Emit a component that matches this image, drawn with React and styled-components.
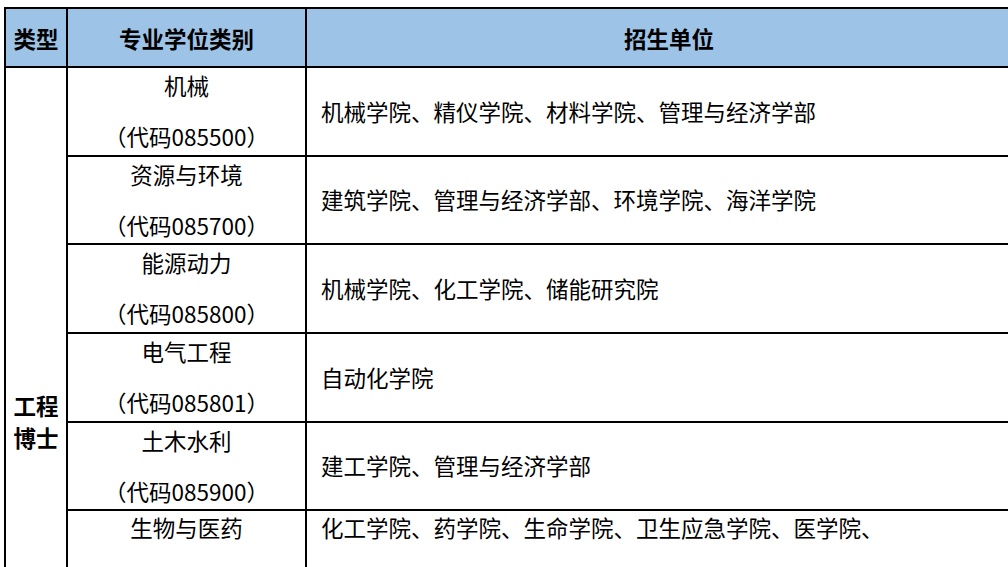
import React from 'react';
import styled, { createGlobalStyle } from 'styled-components';

const GlobalStyle = createGlobalStyle`
  html, body {
    margin: 0;
    padding: 0;
    background: #ffffff;
    overflow: hidden;
  }
  body {
    font-family: "Noto Sans CJK SC", "Noto Sans", sans-serif;
    color: #000000;
  }
`;

const Table = styled.table`
  margin: 7px 0 0 4px;
  width: 1029px;
  border-collapse: collapse;
  table-layout: fixed;
  font-size: 22.5px;
`;

const HeadRow = styled.tr`
  height: 59px;
  background-color: #9dc3e6;
`;

const HeadCell = styled.th`
  border: 2px solid #000;
  padding: 0;
  font-weight: 700;
  text-align: center;
  vertical-align: middle;
  line-height: 26px;
`;

const Row = styled.tr`
  height: ${props => props.height || '88.7px'};
`;

const TypeCell = styled.td`
  border: 2px solid #000;
  padding: 0 0 4px;
  font-weight: 700;
  text-align: center;
  vertical-align: middle;
  line-height: 32px;
`;

const MajorCell = styled.td`
  border: 2px solid #000;
  padding: 4px 0;
  text-align: center;
  vertical-align: ${props => props.align || 'middle'};
  line-height: 25.5px;
  white-space: pre-line;
`;

const UnitCell = styled.td`
  border: 2px solid #000;
  padding: 4px 14px;
  text-align: left;
  vertical-align: ${props => props.align || 'middle'};
  line-height: 25.5px;
`;

const rows = [
  { name: '机械', code: '085500', units: '机械学院、精仪学院、材料学院、管理与经济学部' },
  { name: '资源与环境', code: '085700', units: '建筑学院、管理与经济学部、环境学院、海洋学院' },
  { name: '能源动力', code: '085800', units: '机械学院、化工学院、储能研究院' },
  { name: '电气工程', code: '085801', units: '自动化学院' },
  { name: '土木水利', code: '085900', units: '建工学院、管理与经济学部' },
];

const App = () => {
  return (
    <>
      <GlobalStyle />
      <Table>
        <colgroup>
          <col style={{ width: '62px' }} />
          <col style={{ width: '239px' }} />
          <col />
        </colgroup>
        <thead>
          <HeadRow>
            <HeadCell>类型</HeadCell>
            <HeadCell>专业学位类别</HeadCell>
            <HeadCell>招生单位</HeadCell>
          </HeadRow>
        </thead>
        <tbody>
          {rows.map((row, i) => (
            <Row key={row.code}>
              {i === 0 && (
                <TypeCell rowSpan={rows.length + 1}>
                  工程
                  <br />
                  博士
                </TypeCell>
              )}
              <MajorCell>{`${row.name}\n\n（代码${row.code}）`}</MajorCell>
              <UnitCell>{row.units}</UnitCell>
            </Row>
          ))}
          <Row height="269px">
            <MajorCell align="top">{'生物与医药\n\n\n（代码086000）'}</MajorCell>
            <UnitCell align="top">化工学院、药学院、生命学院、卫生应急学院、医学院、</UnitCell>
          </Row>
        </tbody>
      </Table>
    </>
  );
};

export default App;
